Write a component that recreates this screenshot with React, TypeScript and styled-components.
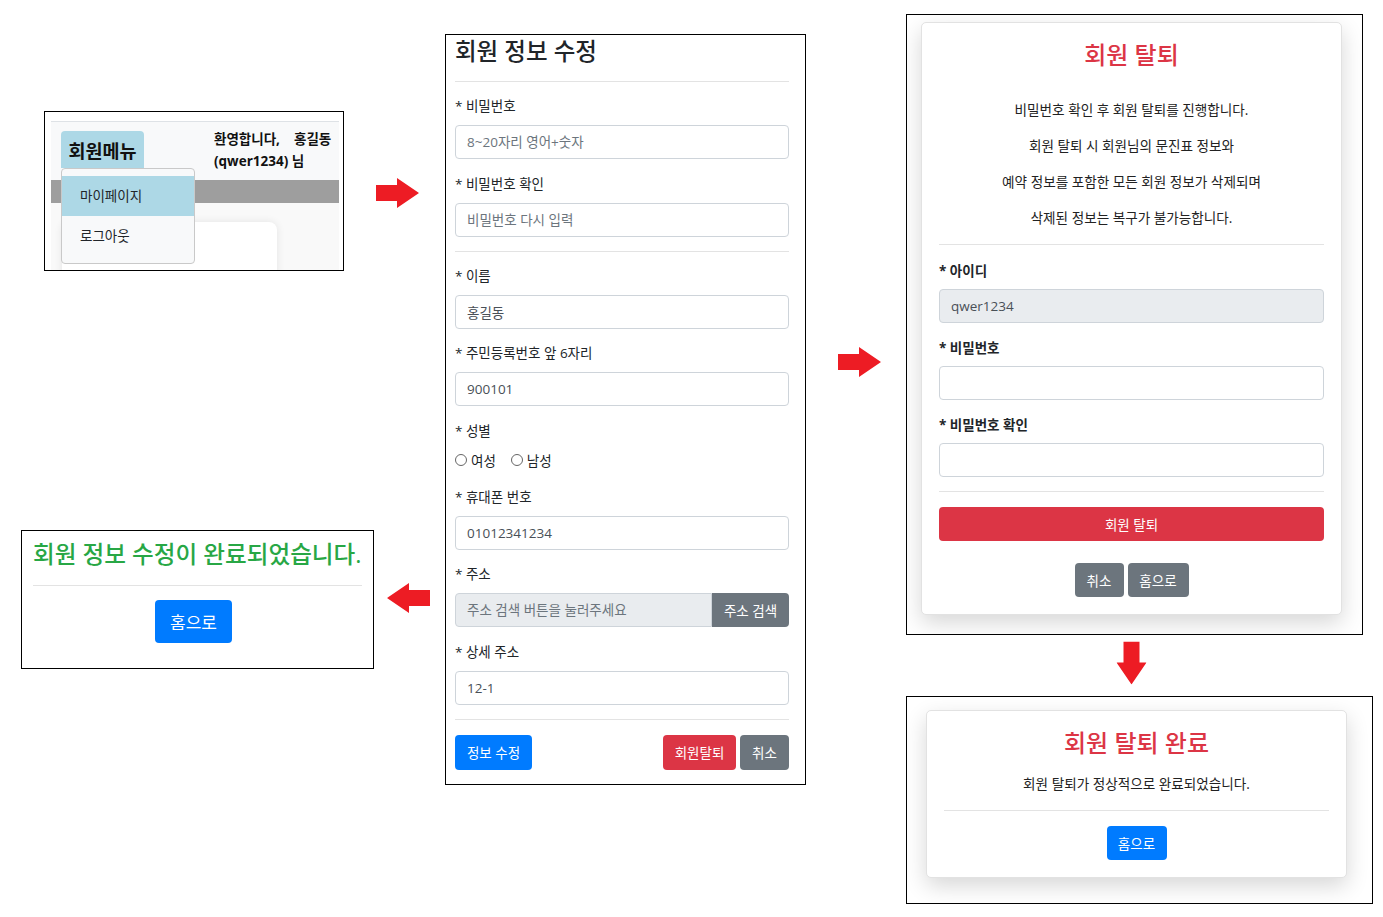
import React from "react";
import styled, { createGlobalStyle } from "styled-components";

const FONT = `"Open Sans", "Noto Sans CJK KR", sans-serif`;

const GlobalStyle = createGlobalStyle`
  * { box-sizing: border-box; }
  html, body { margin: 0; padding: 0; background: #fff; }
  body { font-family: ${FONT}; color: #212529; }
  #root { width: 1383px; height: 917px; }
`;

const Canvas = styled.main`
  position: relative;
  width: 1383px;
  height: 917px;
  overflow: hidden;
  background: #fff;
`;

const Shot = styled.section<{ $x: number; $y: number; $w: number; $h: number }>`
  position: absolute;
  left: ${(p) => p.$x}px;
  top: ${(p) => p.$y}px;
  width: ${(p) => p.$w}px;
  height: ${(p) => p.$h}px;
  border: 1px solid #000;
  background: #fff;
  overflow: hidden;
`;

/* ---------- arrows ---------- */
const ArrowBox = styled.div<{ $x: number; $y: number; $rot: number }>`
  position: absolute;
  left: ${(p) => p.$x}px;
  top: ${(p) => p.$y}px;
  width: 43px;
  height: 30px;
  transform: rotate(${(p) => p.$rot}deg);
  svg { display: block; }
`;

function Arrow({ x, y, rot }: { x: number; y: number; rot: number }) {
  return (
    <ArrowBox $x={x} $y={y} $rot={rot}>
      <svg width="43" height="30" viewBox="0 0 43 30">
        <polygon points="0,7 21,7 21,0 43,15 21,30 21,23 0,23" fill="#ed1c24" />
      </svg>
    </ArrowBox>
  );
}

/* ---------- shot 1: member menu ---------- */
const MenuPage = styled.div`
  height: 100%;
  padding: 9px 4px 0 6px;
  display: flex;
  flex-direction: column;
`;

const NavBar = styled.div`
  flex-shrink: 0;
  display: flex;
  align-items: flex-start;
  height: 59px;
  border-top: 1px solid #dee2e6;
  background: #f8f9fa;
  padding: 9px 0 0 10px;
  position: relative;
  z-index: 2;
`;

const MenuWrap = styled.div`
  position: relative;
`;

const MenuButton = styled.div`
  width: 83px;
  height: 37px;
  background: #add8e6;
  border-radius: 4px 4px 0 0;
  display: flex;
  align-items: center;
  justify-content: center;
  font-size: 18.5px;
  font-weight: 700;
  color: #111;
`;

const Dropdown = styled.div`
  position: absolute;
  top: 37px;
  left: 0;
  width: 134px;
  height: 96px;
  background: #f8f9fa;
  border: 1px solid #c9c9c9;
  border-radius: 4px;
  padding-top: 7px;
`;

const MenuItem = styled.div<{ $active?: boolean }>`
  height: 40px;
  line-height: 40px;
  padding-left: 18px;
  font-size: 13.5px;
  color: #212529;
  background: ${(p) => (p.$active ? "#add8e6" : "transparent")};
`;

const Welcome = styled.div`
  margin: -3px 0 0 70px;
  font-size: 13.5px;
  font-weight: 700;
  line-height: 22px;
  white-space: nowrap;
  color: #111;
`;

const GrayBar = styled.div`
  flex-shrink: 0;
  height: 23px;
  background: #9e9e9e;
`;

const MenuBody = styled.div`
  flex: 1;
  min-height: 0;
  overflow: hidden;
  background: #f9f9f9;
  padding: 19px 0 0 11px;
`;

const GhostCard = styled.div`
  width: 215px;
  height: 80px;
  background: #fff;
  border-radius: 8px;
  box-shadow: 0 0 8px rgba(0, 0, 0, 0.09);
`;

/* ---------- shot 2: edit form ---------- */
const FormPage = styled.div`
  padding: 0 16px 0 9px;
`;

const FormTitle = styled.h2`
  margin: 0;
  height: 32px;
  line-height: 32px;
  font-size: 23.5px;
  font-weight: 500;
  color: #212529;
`;

const Rule = styled.div<{ $top: number; $bottom: number }>`
  height: 1px;
  background: #e3e3e3;
  margin: ${(p) => p.$top}px 0 ${(p) => p.$bottom}px;
`;

const Field = styled.div<{ $gap?: number }>`
  margin-bottom: ${(p) => (p.$gap ?? 14.5)}px;
`;

const Label = styled.div<{ $bold?: boolean; $gap?: number }>`
  height: 20px;
  line-height: 20px;
  font-size: 13.5px;
  font-weight: ${(p) => (p.$bold ? 700 : 400)};
  color: #212529;
  margin-bottom: ${(p) => p.$gap ?? 9}px;
  white-space: nowrap;
`;

const TextInput = styled.input<{ $grey?: boolean }>`
  display: block;
  width: 100%;
  height: 34px;
  border: 1px solid #ced4da;
  border-radius: 4px;
  padding: 0 11px;
  font-family: ${FONT};
  font-size: 13.5px;
  color: #495057;
  background: ${(p) => (p.$grey ? "#e9ecef" : "#fff")};
  outline: none;
  &::placeholder { color: #6c757d; opacity: 1; }
`;

const InputGroup = styled.div`
  display: flex;
  height: 34px;
  ${TextInput} {
    flex: 1;
    border-radius: 4px 0 0 4px;
  }
`;

const Btn = styled.button<{ $tone: "blue" | "red" | "gray"; $w?: number; $h?: number; $size?: number; $block?: boolean }>`
  height: ${(p) => p.$h ?? 35}px;
  width: ${(p) => (p.$block ? "100%" : p.$w ? `${p.$w}px` : "auto")};
  padding: 0;
  border: none;
  border-radius: 4px;
  font-family: ${FONT};
  font-size: ${(p) => p.$size ?? 13.5}px;
  color: #fff;
  white-space: nowrap;
  background: ${(p) => (p.$tone === "blue" ? "#007bff" : p.$tone === "red" ? "#dc3545" : "#6c757d")};
  display: inline-flex;
  align-items: center;
  justify-content: center;
`;

const AddonBtn = styled(Btn)`
  border-radius: 0 4px 4px 0;
  height: 34px;
`;

const RadioRow = styled.div`
  display: flex;
  align-items: center;
  height: 20px;
  gap: 15px;
  margin-bottom: 16.5px;
`;

const RadioOpt = styled.label`
  display: flex;
  align-items: center;
  gap: 4px;
  font-size: 13.5px;
  color: #212529;
`;

const RadioDot = styled.span`
  width: 12px;
  height: 12px;
  border-radius: 50%;
  border: 1px solid #666;
  background: #fff;
`;

const ActionRow = styled.div`
  display: flex;
  align-items: center;
  gap: 4px;
`;

const Spacer = styled.div`
  flex: 1;
`;

/* ---------- shots 3 & 4: withdraw cards ---------- */
const CardStage = styled.div<{ $pad: string }>`
  padding: ${(p) => p.$pad};
`;

const Card = styled.div`
  width: 421px;
  background: #fff;
  border: 1px solid #e2e2e2;
  border-radius: 5px;
  padding: 17px;
  box-shadow: 0 8px 22px rgba(0, 0, 0, 0.16);
`;

const RedTitle = styled.h2`
  margin: 0;
  height: 30px;
  line-height: 30px;
  text-align: center;
  font-size: 24px;
  font-weight: 500;
  color: #dc3545;
  white-space: nowrap;
`;

const Para = styled.p<{ $top: number }>`
  margin: ${(p) => p.$top}px 0 0;
  line-height: 20px;
  font-size: 13.6px;
  text-align: center;
  color: #222;
  white-space: nowrap;
`;

const CenterRow = styled.div<{ $top?: number }>`
  display: flex;
  justify-content: center;
  gap: 4px;
  margin-top: ${(p) => p.$top ?? 0}px;
`;

/* ---------- shot 5: edit done ---------- */
const DonePage = styled.div`
  padding: 7px 11px 0 11px;
`;

const GreenTitle = styled.h2`
  margin: 0;
  height: 32px;
  line-height: 32px;
  font-size: 23.6px;
  font-weight: 500;
  color: #28a745;
  white-space: nowrap;
`;

const DoneRow = styled.div`
  display: flex;
  justify-content: center;
  padding-right: 8px;
`;

export default function App() {
  return (
    <>
      <GlobalStyle />
      <Canvas>
        {/* member menu */}
        <Shot $x={44} $y={111} $w={300} $h={160}>
          <MenuPage>
            <NavBar>
              <MenuWrap>
                <MenuButton>회원메뉴</MenuButton>
                <Dropdown>
                  <MenuItem $active>마이페이지</MenuItem>
                  <MenuItem>로그아웃</MenuItem>
                </Dropdown>
              </MenuWrap>
              <Welcome>
                환영합니다,&nbsp;&nbsp;&nbsp; 홍길동
                <br />
                (qwer1234) 님
              </Welcome>
            </NavBar>
            <GrayBar />
            <MenuBody>
              <GhostCard />
            </MenuBody>
          </MenuPage>
        </Shot>

        <Arrow x={376} y={178} rot={0} />

        {/* edit form */}
        <Shot $x={445} $y={34} $w={361} $h={751}>
          <FormPage>
            <FormTitle>회원 정보 수정</FormTitle>
            <Rule $top={14} $bottom={14.3} />
            <Field>
              <Label>* 비밀번호</Label>
              <TextInput type="password" placeholder="8~20자리 영어+숫자" />
            </Field>
            <Field $gap={0}>
              <Label>* 비밀번호 확인</Label>
              <TextInput type="password" placeholder="비밀번호 다시 입력" />
            </Field>
            <Rule $top={14.2} $bottom={14} />
            <Field>
              <Label>* 이름</Label>
              <TextInput defaultValue="홍길동" />
            </Field>
            <Field>
              <Label>* 주민등록번호 앞 6자리</Label>
              <TextInput defaultValue="900101" />
            </Field>
            <Label $gap={9.5}>* 성별</Label>
            <RadioRow>
              <RadioOpt>
                <RadioDot />
                여성
              </RadioOpt>
              <RadioOpt>
                <RadioDot />
                남성
              </RadioOpt>
            </RadioRow>
            <Field>
              <Label>* 휴대폰 번호</Label>
              <TextInput defaultValue="01012341234" />
            </Field>
            <Field>
              <Label>* 주소</Label>
              <InputGroup>
                <TextInput $grey readOnly placeholder="주소 검색 버튼을 눌러주세요" />
                <AddonBtn $tone="gray" $w={77}>주소 검색</AddonBtn>
              </InputGroup>
            </Field>
            <Field $gap={0}>
              <Label>* 상세 주소</Label>
              <TextInput defaultValue="12-1" />
            </Field>
            <Rule $top={14} $bottom={15} />
            <ActionRow>
              <Btn $tone="blue" $w={77}>정보 수정</Btn>
              <Spacer />
              <Btn $tone="red" $w={73}>회원탈퇴</Btn>
              <Btn $tone="gray" $w={49}>취소</Btn>
            </ActionRow>
          </FormPage>
        </Shot>

        <Arrow x={838} y={347} rot={0} />

        {/* withdraw */}
        <Shot $x={906} $y={14} $w={457} $h={621}>
          <CardStage $pad="7px 0 0 14px">
            <Card>
              <RedTitle>회원 탈퇴</RedTitle>
              <Para $top={30}>비밀번호 확인 후 회원 탈퇴를 진행합니다.</Para>
              <Para $top={16}>회원 탈퇴 시 회원님의 문진표 정보와</Para>
              <Para $top={16}>예약 정보를 포함한 모든 회원 정보가 삭제되며</Para>
              <Para $top={16}>삭제된 정보는 복구가 불가능합니다.</Para>
              <Rule $top={16} $bottom={15.5} />
              <Field>
                <Label $bold $gap={8.5}>* 아이디</Label>
                <TextInput $grey readOnly defaultValue="qwer1234" />
              </Field>
              <Field>
                <Label $bold $gap={8.5}>* 비밀번호</Label>
                <TextInput type="password" />
              </Field>
              <Field $gap={0}>
                <Label $bold $gap={8.5}>* 비밀번호 확인</Label>
                <TextInput type="password" />
              </Field>
              <Rule $top={14} $bottom={14.5} />
              <Btn $tone="red" $block $h={34}>회원 탈퇴</Btn>
              <CenterRow $top={22}>
                <Btn $tone="gray" $w={49} $h={34}>취소</Btn>
                <Btn $tone="gray" $w={61} $h={34}>홈으로</Btn>
              </CenterRow>
            </Card>
          </CardStage>
        </Shot>

        <Arrow x={1110} y={648} rot={90} />

        {/* withdraw done */}
        <Shot $x={906} $y={696} $w={467} $h={208}>
          <CardStage $pad="13px 0 0 19px">
            <Card>
              <RedTitle>회원 탈퇴 완료</RedTitle>
              <Para $top={16}>회원 탈퇴가 정상적으로 완료되었습니다.</Para>
              <Rule $top={16} $bottom={15} />
              <CenterRow>
                <Btn $tone="blue" $w={60} $h={34}>홈으로</Btn>
              </CenterRow>
            </Card>
          </CardStage>
        </Shot>

        <Arrow x={387} y={583} rot={180} />

        {/* edit done */}
        <Shot $x={21} $y={530} $w={353} $h={139}>
          <DonePage>
            <GreenTitle>회원 정보 수정이 완료되었습니다.</GreenTitle>
            <Rule $top={15} $bottom={14} />
            <DoneRow>
              <Btn $tone="blue" $w={77} $h={43} $size={17}>홈으로</Btn>
            </DoneRow>
          </DonePage>
        </Shot>
      </Canvas>
    </>
  );
}
